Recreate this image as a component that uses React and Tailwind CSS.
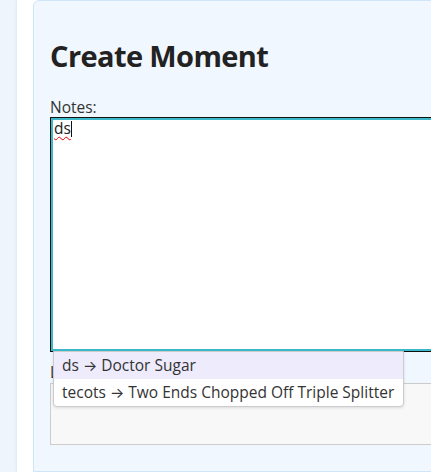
import React from "react";

const suggestions = [
  { abbr: "ds", full: "Doctor Sugar" },
  { abbr: "tecots", full: "Two Ends Chopped Off Triple Splitter" },
];

export default function App() {
  return (
    <div className="w-[431px] h-[472px] overflow-hidden flex bg-white text-[#333]" style={{ fontFamily: "'Open Sans', 'Noto Sans', sans-serif" }}>
      {/* side rail */}
      <div className="w-[17px] shrink-0 bg-[#eef5fc] shadow-[inset_-3px_0_3px_-2px_#dde7f1]" />
      <div className="w-[16px] shrink-0 bg-white" />

      {/* card */}
      <div className="w-[540px] shrink-0 rounded-tl-[6px] border border-[#cfe6f8] bg-[#f0f7fe] pl-[16px] pt-[37px]">
        <h1 className="text-[29px] leading-[36px] font-bold text-[#222] tracking-[-0.6px]">Create Moment</h1>

        <label className="block mt-[23px] text-[15.5px] leading-[20px] text-[#333]">Notes:</label>
        <div className="relative">
          <div className="h-[235px] border border-[#111] bg-white shadow-[inset_0_0_0_2px_#3bb9c9] px-[3px] pt-0 text-[15.5px] leading-[20px] text-[#222]">
            <span className="underline decoration-wavy decoration-[#e00] decoration-1 underline-offset-[2px]">ds</span>
            <span className="inline-block w-px h-[16px] bg-[#111] align-[-3px]" />
          </div>

          <label className="block mt-[10px] text-[15.5px] leading-[20px] text-[#333]">Location:</label>
          <div className="h-[62px] mt-[1px] border border-[#ccc] bg-[#f8f8f8]" />

          {/* autocomplete menu */}
          <div className="absolute left-[3px] top-[234px] w-[351px] bg-white border border-[#ccc] rounded-b-[4px] shadow-[0_1px_3px_rgba(0,0,0,0.12)] text-[15.5px] text-[#333]">
            {suggestions.map((s, i) => (
              <div key={s.abbr} className={`h-[27px] leading-[26px] px-[8px] ${i === 0 ? "bg-[#eeebfc]" : ""}`}>
                {s.abbr} <span style={{ fontFamily: "Inter, sans-serif" }} className="text-[15px]">→</span> {s.full}
              </div>
            ))}
          </div>
        </div>
      </div>
    </div>
  );
}
